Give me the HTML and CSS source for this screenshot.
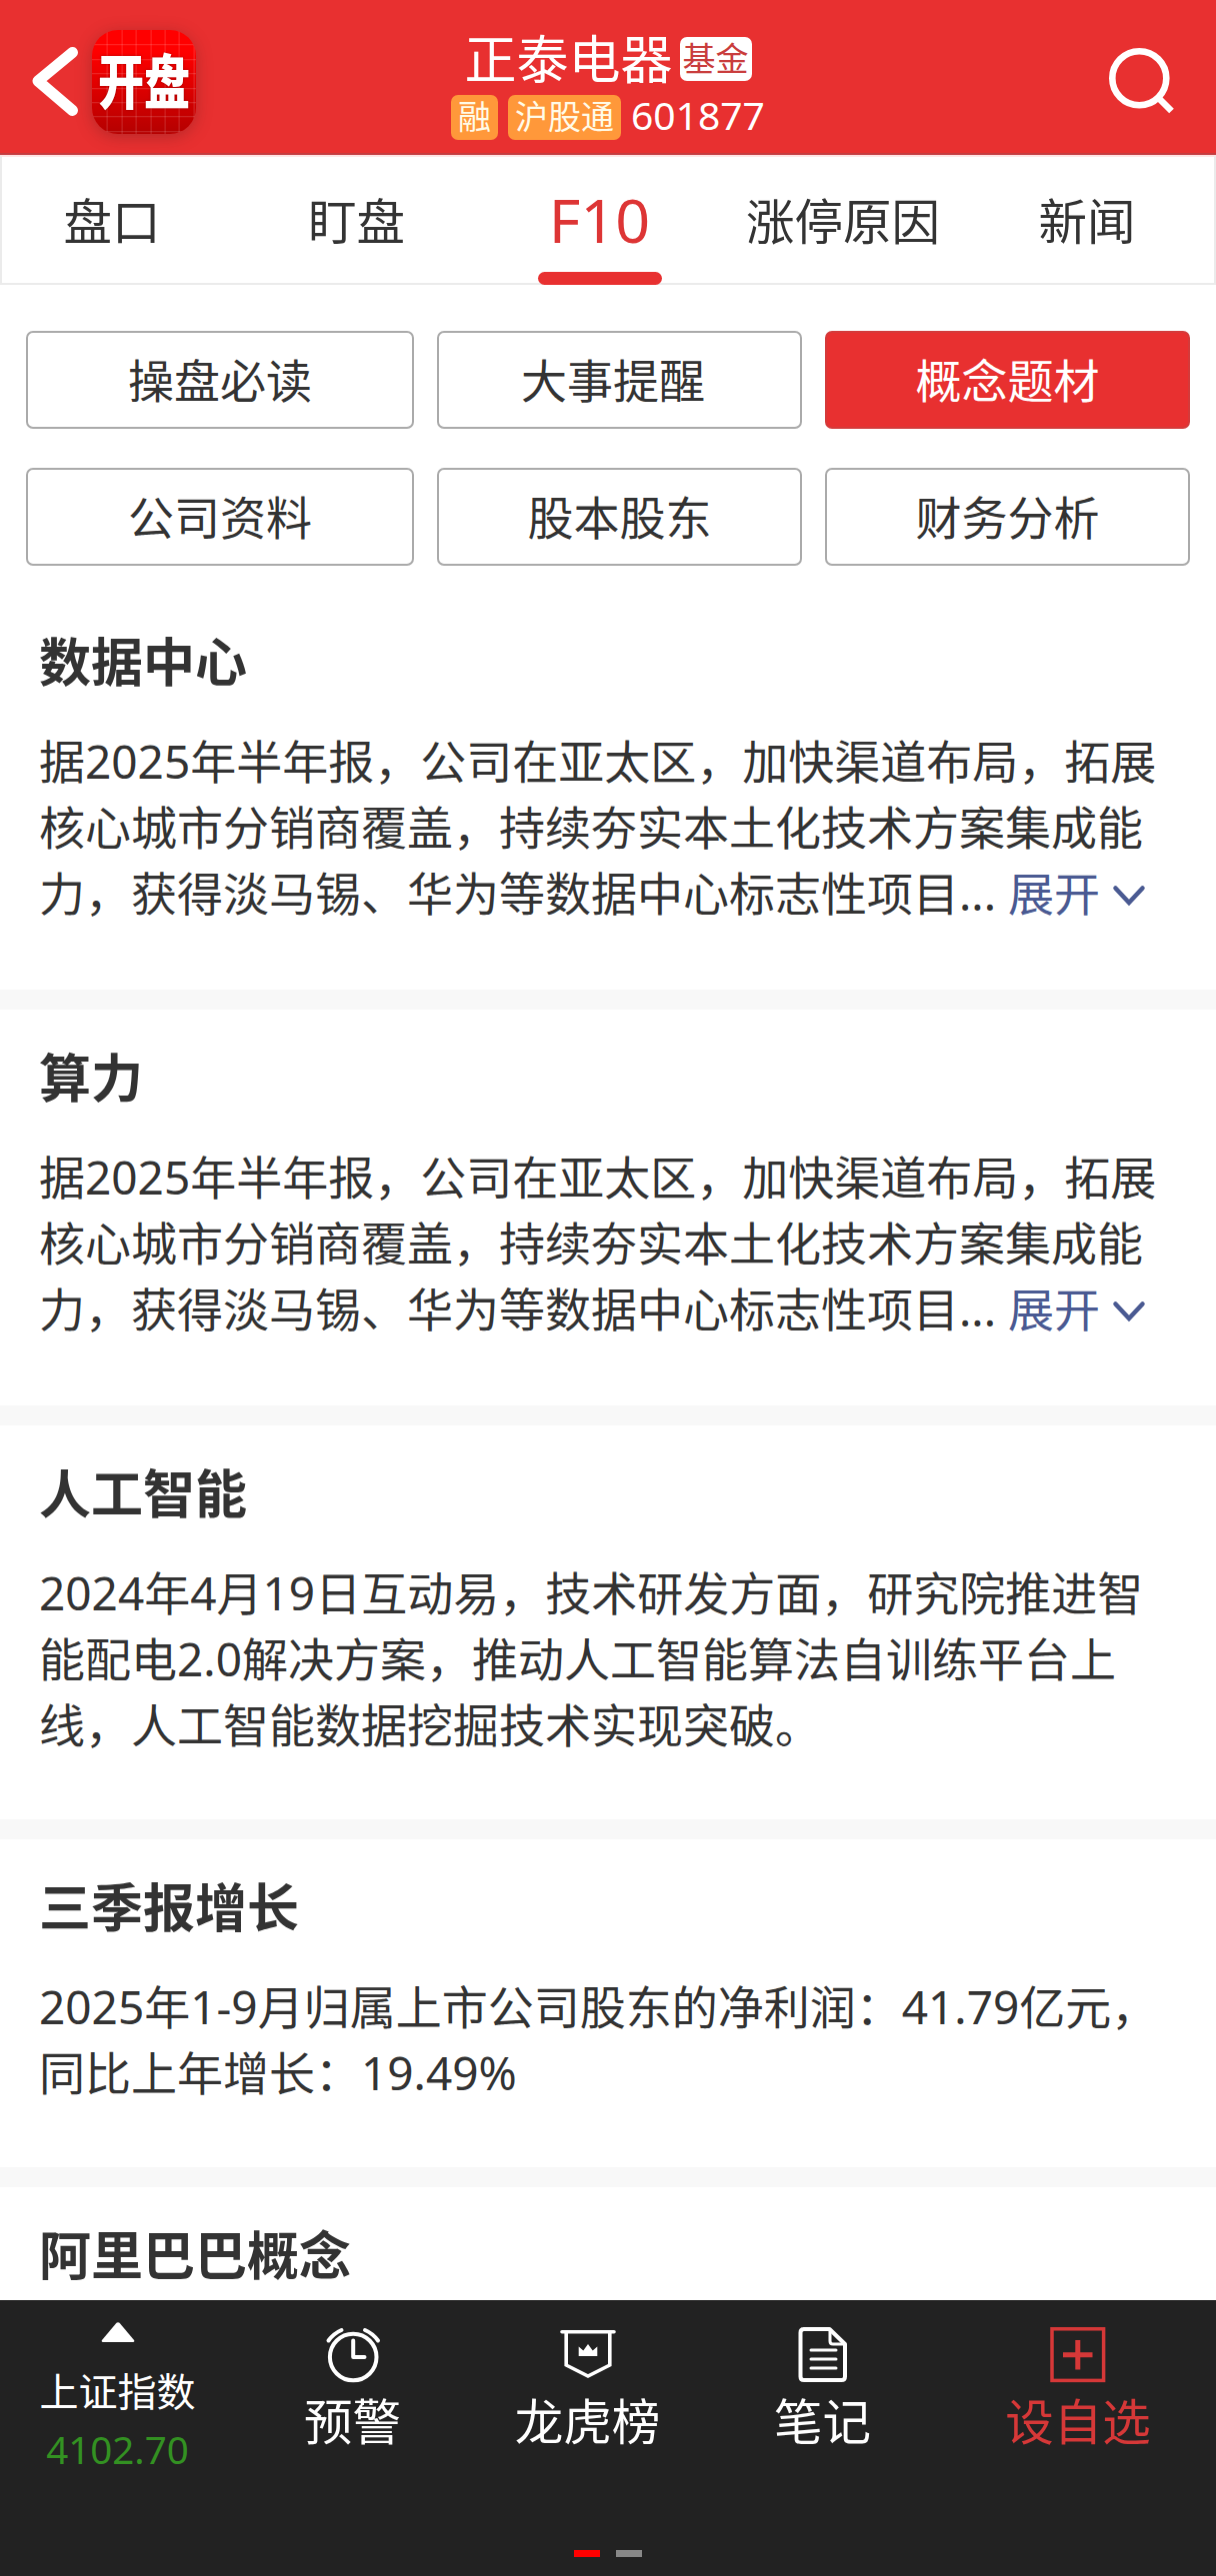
FILE: index.html
```html
<!DOCTYPE html>
<html lang="zh-Hans">
<head>
  <meta charset="UTF-8" />
  <title>正泰电器 601877 - F10</title>
  <link rel="stylesheet" href="styles.css">
</head>
<body>

<header class="topbar">
  <div class="topbar-left">
    <svg class="back" width="52" height="80" viewBox="0 0 52 80" fill="none" stroke="#fff" stroke-width="11" stroke-linecap="round" stroke-linejoin="round">
      <path d="M45.5 11.5 L11 40 L45.5 69.5" />
    </svg>
    <div class="logo"><span>开盘</span></div>
  </div>
  <div class="stock">
    <div class="stock-name">正泰电器<span class="badge fund">基金</span></div>
    <div class="stock-code">
      <span class="badge">融</span>
      <span class="badge">沪股通</span>
      <span class="code">601877</span>
    </div>
  </div>
  <svg class="search" width="72" height="72" viewBox="0 0 72 72" fill="none" stroke="#fff" stroke-width="6.6">
    <circle cx="34.3" cy="34.3" r="27" />
    <path d="M52.5 53 L66.5 67" />
  </svg>
</header>

<nav class="tabs">
  <a class="tab">盘口</a>
  <a class="tab">盯盘</a>
  <a class="tab active">F10</a>
  <a class="tab">涨停原因</a>
  <a class="tab">新闻</a>
</nav>

<div class="menu">
  <button>操盘必读</button>
  <button class="remind">大事提醒</button>
  <button class="on">概念题材</button>
  <button>公司资料</button>
  <button>股本股东</button>
  <button>财务分析</button>
</div>

<main class="list">
  <section class="item long">
    <h2>数据中心</h2>
    <p>据2025年半年报，公司在亚太区，加快渠道布局，拓展核心城市分销商覆盖，持续夯实本土化技术方案集成能力，获得淡马锡、华为等数据中心标志性项目... <a class="more">展开<svg width="34" height="22" viewBox="0 0 34 22" fill="none" stroke="#4a5a92" stroke-width="4.5" stroke-linecap="round"><path d="M3.5 3.5 L17 18 L30.5 3.5" /></svg></a></p>
  </section>
  <section class="item long">
    <h2>算力</h2>
    <p>据2025年半年报，公司在亚太区，加快渠道布局，拓展核心城市分销商覆盖，持续夯实本土化技术方案集成能力，获得淡马锡、华为等数据中心标志性项目... <a class="more">展开<svg width="34" height="22" viewBox="0 0 34 22" fill="none" stroke="#4a5a92" stroke-width="4.5" stroke-linecap="round"><path d="M3.5 3.5 L17 18 L30.5 3.5" /></svg></a></p>
  </section>
  <section class="item">
    <h2>人工智能</h2>
    <p>2024年4月19日互动易，技术研发方面，研究院推进智能配电2.0解决方案，推动人工智能算法自训练平台上线，人工智能数据挖掘技术实现突破。</p>
  </section>
  <section class="item">
    <h2>三季报增长</h2>
    <p>2025年1-9月归属上市公司股东的净利润：41.79亿元，同比上年增长：19.49%</p>
  </section>
  <section class="item">
    <h2>阿里巴巴概念</h2>
  </section>
</main>

<footer class="bottom">
  <div class="actions">
    <a class="index">
      <svg width="34" height="20" viewBox="0 0 34 20" fill="#fff"><path d="M15.5 .8 Q17 -.4 18.5 .8 L33 18 Q34 20 32 20 H2 Q0 20 1 18 Z" /></svg>
      <span class="index-name">上证指数</span>
      <span class="index-value">4102.70</span>
    </a>
    <a class="action">
      <!-- 闹钟 -->
      <svg width="56" height="56" viewBox="0 0 56 56" fill="none" stroke="#fff" stroke-width="4" stroke-linecap="round" stroke-linejoin="round">
        <circle cx="28.2" cy="30" r="23.3" />
        <path d="M28.2 13.5 V30 H39.5" />
        <path d="M3.5 13.5 Q8.5 6.5 16.5 3 M40 3 Q48 6.5 53 13.5" />
      </svg>
      预警
    </a>
    <a class="action">
      <!-- 锦旗 + 皇冠 -->
      <svg width="56" height="56" viewBox="0 0 56 56" fill="none" stroke="#fff" stroke-width="3.6">
        <path d="M2 4.7 H54" stroke-linecap="round" />
        <path d="M6.2 5 V38 L28 49 L49.8 38 V5" />
        <path d="M18.7 29 V19.5 L23.3 23.5 L28 17 L32.7 23.5 L37.3 19.5 V29 Z" fill="#fff" stroke="none" />
      </svg>
      龙虎榜
    </a>
    <a class="action">
      <!-- 文档 -->
      <svg width="56" height="56" viewBox="0 0 56 56" fill="none" stroke="#fff" stroke-width="4" stroke-linejoin="round">
        <path d="M8.5 2 H34.5 L50 17 V49.5 Q50 53 46.5 53 H9 Q5.5 53 5.5 49.5 V5.5 Q5.5 2 9 2 Z" />
        <path d="M35 3 V14 Q35 17 38 17 H49" stroke-width="3" />
        <path d="M16 23 H41 M16 32 H41 M16 41 H41" stroke-width="3" stroke-linecap="round" />
      </svg>
      笔记
    </a>
    <a class="action add">
      <svg width="56" height="56" viewBox="0 0 56 56" fill="none" stroke="#d63838">
        <rect x="2" y="1.8" width="51.6" height="51.6" stroke-width="3.5" />
        <path d="M27.8 13 V42.5 M13 27.8 H42.5" stroke-width="5" />
      </svg>
      设自选
    </a>
  </div>
  <div class="pager"><i class="cur"></i><i></i></div>
</footer>

</body>
</html>
```
FILE: styles.css
```css
* {
  box-sizing: border-box;
}
body {
  margin: 0;
  width: 1216px;
  height: 2577px;
  overflow: hidden;
  display: flex;
  flex-direction: column;
  background: #fff;
  color: #333;
  font-family: "Noto Sans", "Noto Sans CJK SC", sans-serif;
}

/* 顶部 */
.topbar {
  flex: none;
  display: grid;
  grid-template-columns: 1fr auto 1fr;
  align-items: start;
  height: 155px;
  padding: 30px 39px 0 27px;
  background: #e83030;
  border-bottom: 2px solid #c43c40;
  color: #fff;
}
.topbar-left {
  display: flex;
}
.back {
  margin: 11px 13px 0 0;
}
.logo {
  width: 104px;
  height: 104px;
  border-radius: 26px;
  display: flex;
  align-items: center;
  justify-content: center;
  background:
    repeating-linear-gradient(90deg, transparent 0 13.4px, rgba(255, 255, 255, 0.17) 13.4px 14.4px) 1.6px 0,
    repeating-linear-gradient(180deg, transparent 0 13.4px, rgba(255, 255, 255, 0.17) 13.4px 14.4px) 0 1.2px,
    linear-gradient(#ff0000 20%, #b40000);
  box-shadow: 0 3px 16px rgba(90, 30, 30, 0.35);
}
.logo span {
  font-size: 59px;
  font-weight: 900;
  line-height: 102px;
  height: 104px;
  white-space: nowrap;
  transform: scaleX(0.78);
  text-shadow: 0 0 3px rgba(120, 0, 0, 0.6);
}
.stock {
  display: flex;
  flex-direction: column;
  align-items: center;
  padding-left: 12px;
}
.stock-name {
  display: flex;
  align-items: center;
  font-size: 52px;
  line-height: 58px;
  height: 58px;
}
.badge {
  height: 45px;
  padding: 0 7px;
  border-radius: 7px;
  background: #ff983a;
  color: #fffbe8;
  font-size: 33px;
  line-height: 44px;
}
.fund {
  height: 44px;
  margin-left: 7px;
  padding: 0 3px;
  background: #fff;
  color: #c93c3c;
  line-height: 43px;
}
.stock-code {
  display: flex;
  align-items: center;
  gap: 10px;
  margin-top: 7px;
}
.code {
  height: 45px;
  font-size: 39px;
  line-height: 40px;
}
.search {
  margin-top: 14px;
  justify-self: end;
}

/* 标签页 */
.tabs {
  flex: none;
  display: grid;
  grid-template-columns: 233px 243px 243px 244px 244px;
  height: 130px;
  border: 2px solid #ebebeb;
  border-top-color: #ffe4e4;
}
.tab {
  display: flex;
  align-items: center;
  justify-content: center;
  height: 128px;
  padding-bottom: 5px;
  font-size: 48.5px;
}
.tab:first-child {
  padding-right: 13px;
}
.tab.active {
  position: relative;
  padding-bottom: 3px;
  font-size: 61px;
  color: #dd3535;
}
.tab.active::after {
  content: "";
  position: absolute;
  left: 60px;
  bottom: 0;
  width: 124px;
  height: 13px;
  border-radius: 7px;
  background: #e83030;
}

/* F10 菜单 */
.menu {
  flex: none;
  display: grid;
  grid-template-columns: 388px 365px 365px;
  grid-auto-rows: 98px;
  gap: 39px 23px;
  padding: 46px 26px 28px;
}
.menu button {
  padding: 0 0 4px;
  border: 2px solid #aaa;
  border-radius: 7px;
  background: #fff;
  color: #333;
  font-family: inherit;
  font-size: 46px;
}
.menu .remind {
  padding-right: 13px;
}
.menu .on {
  border-color: #d43a3a;
  background: #e83030;
  color: #fff;
}

/* 题材列表 */
.list {
  flex: 1;
  min-height: 0;
  overflow: hidden;
}
.item {
  padding: 32px 38px 62px 39px;
  border-bottom: 20px solid #f8f8f8;
}
.item.long {
  padding-bottom: 64px;
}
.item h2 {
  margin: 0 0 30px;
  font-size: 52px;
  line-height: 72px;
  font-weight: bold;
}
.item p {
  margin: 0;
  font-size: 46px;
  line-height: 66px;
}
.more {
  color: #4a5a92;
}
.more svg {
  margin-left: 12px;
  vertical-align: 4px;
}

/* 底部 */
.bottom {
  flex: none;
  height: 276px;
  background: #222;
  color: #fff;
}
.actions {
  display: grid;
  grid-template-columns: 235px 235px 235px 235px 276px;
  height: 250px;
}
.index,
.action {
  display: flex;
  flex-direction: column;
  align-items: center;
}
.index svg {
  margin-top: 22px;
}
.index-name {
  margin-top: 24px;
  font-size: 39px;
  line-height: 50px;
}
.index-value {
  margin-top: 8px;
  font-size: 38.5px;
  line-height: 50px;
  color: #339122;
}
.action {
  padding-top: 27px;
  font-size: 48.5px;
  line-height: 76px;
}
.add {
  color: #d63838;
}
.pager {
  display: flex;
  justify-content: center;
  gap: 16px;
}
.pager i {
  width: 26px;
  height: 7px;
  background: #888;
}
.pager .cur {
  background: #f00;
}
```
